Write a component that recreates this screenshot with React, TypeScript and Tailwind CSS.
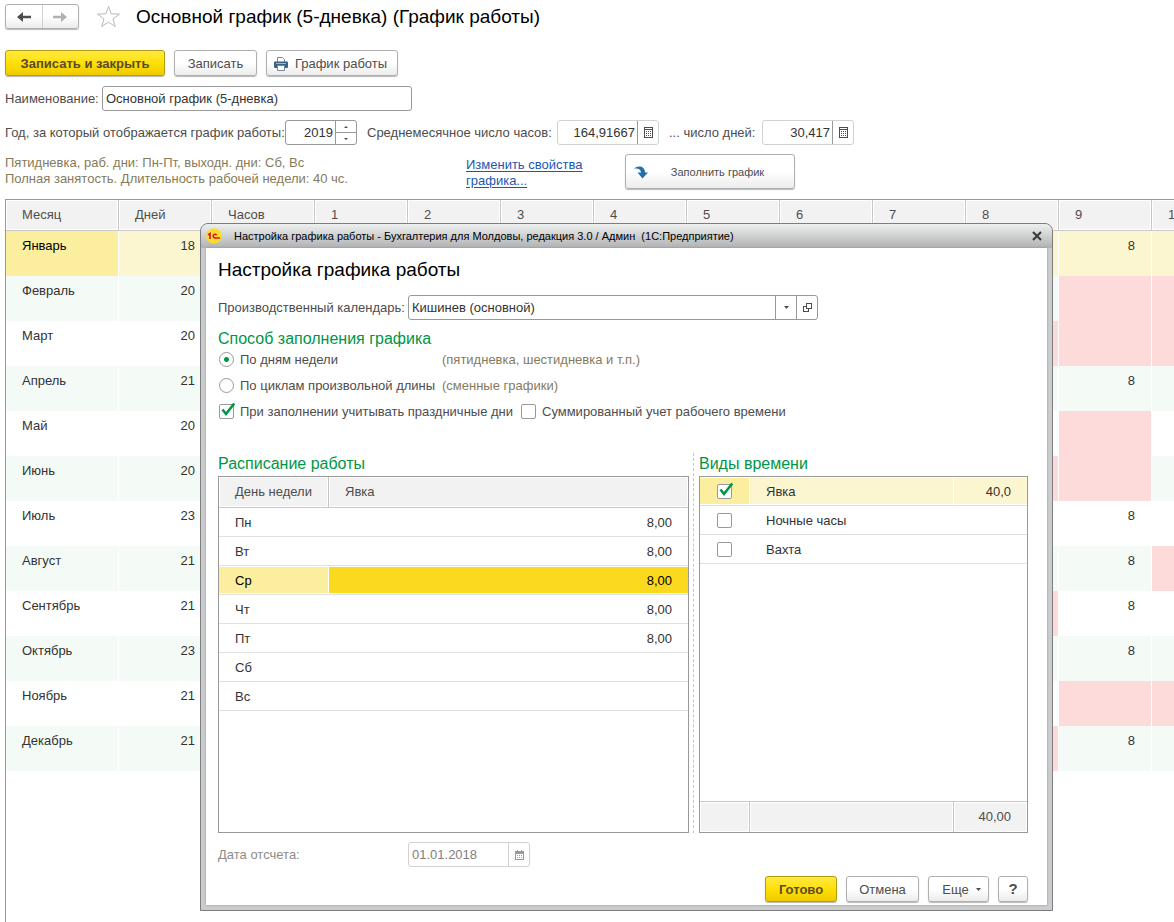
import type { ReactNode } from "react";
import clsx from "clsx";

const months = [
  { name: "Январь", days: 18, cells: ["", "8", ""] },
  { name: "Февраль", days: 20, cells: ["", "off", "off"] },
  { name: "Март", days: 20, cells: ["off", "off", "off"] },
  { name: "Апрель", days: 21, cells: ["", "8", ""] },
  { name: "Май", days: 20, cells: ["", "off", ""] },
  { name: "Июнь", days: 20, cells: ["off", "off", ""] },
  { name: "Июль", days: 23, cells: ["", "8", ""] },
  { name: "Август", days: 21, cells: ["", "8", "off"] },
  { name: "Сентябрь", days: 21, cells: ["off", "8", ""] },
  { name: "Октябрь", days: 23, cells: ["", "8", ""] },
  { name: "Ноябрь", days: 21, cells: ["", "off", "off"] },
  { name: "Декабрь", days: 21, cells: ["off", "8", ""] },
];

const weekDays = [
  { name: "Пн", hours: "8,00" },
  { name: "Вт", hours: "8,00" },
  { name: "Ср", hours: "8,00" },
  { name: "Чт", hours: "8,00" },
  { name: "Пт", hours: "8,00" },
  { name: "Сб", hours: "" },
  { name: "Вс", hours: "" },
];

const timeKinds = [
  { name: "Явка", hours: "40,0", checked: true },
  { name: "Ночные часы", hours: "", checked: false },
  { name: "Вахта", hours: "", checked: false },
];

const dayColumns = ["1", "2", "3", "4", "5", "6", "7", "8", "9", "10"];

function Button({
  children,
  primary,
  className,
  label,
}: {
  children: ReactNode;
  primary?: boolean;
  className?: string;
  label?: string;
}) {
  return (
    <button
      type="button"
      aria-label={label}
      className={clsx(
        "flex h-[26px] items-center justify-center rounded-[3px] border bg-linear-to-b pt-px shadow-[0_1px_1px_#b8b8b8]",
        primary
          ? "border-[#b39b13] from-[#ffea3a] via-[#ffe000] to-[#efcb00] font-bold text-[#5a4c2c]"
          : "border-[#b0b0b0] from-white via-white to-[#ececec] text-[#4d4d4d]",
        className
      )}
    >
      {children}
    </button>
  );
}

function Checkbox({ id, checked, label }: { id?: string; checked?: boolean; label?: string }) {
  return (
    <span className="relative block size-[15px] shrink-0">
      <input
        id={id}
        type="checkbox"
        aria-label={label}
        defaultChecked={checked}
        className="peer block size-[15px] appearance-none rounded-[2px] border border-[#999] bg-white"
      />
      <svg
        viewBox="0 0 15 15"
        className="pointer-events-none absolute inset-0 hidden size-[15px] overflow-visible peer-checked:block"
      >
        <path d="M3.500 5.500L7 10L15.200-.5" fill="none" stroke="#009646" strokeWidth="2.600" />
      </svg>
    </span>
  );
}

function Radio({ id, checked }: { id: string; checked?: boolean }) {
  return (
    <input
      id={id}
      type="radio"
      name="fill-mode"
      defaultChecked={checked}
      className="size-[15px] shrink-0 appearance-none rounded-full border border-[#999] bg-white checked:bg-[radial-gradient(circle,#009646_2px,#fff_3px)]"
    />
  );
}

function CalculatorIcon() {
  return (
    <svg width="9" height="11" viewBox="0 0 9 11" shapeRendering="crispEdges">
      <rect x="0.5" y="0.5" width="8" height="10" fill="#fff" stroke="#4d4d4d" />
      <path d="M1 2.5h7" stroke="#4d4d4d" />
      <path d="M2 4.5h5M2 6.5h5M2 8.5h5" stroke="#4d4d4d" strokeDasharray="1 1" />
    </svg>
  );
}

function NumberField({ id, value, className }: { id: string; value: string; className: string }) {
  return (
    <div className={clsx("flex h-[25px] rounded-[3px] border border-[#d2d2d2]", className)}>
      <input id={id} defaultValue={value} className="w-full min-w-0 pr-[2px] text-right text-[#333] outline-none" />
      <button
        type="button"
        aria-label="Калькулятор"
        className="flex w-[21px] shrink-0 items-center justify-center border-l border-[#999]"
      >
        <CalculatorIcon />
      </button>
    </div>
  );
}

function HeadCell({ children, last }: { children?: ReactNode; last?: boolean }) {
  return (
    <th
      scope="col"
      className={clsx(
        "h-[31px] border-b border-[#c8c8c8] bg-[#f2f2f2] pl-4 text-left font-normal text-[#4d4d4d] shadow-[inset_0_0_0_1px_#fff]",
        !last && "border-r"
      )}
    >
      {children}
    </th>
  );
}

function YearTable() {
  return (
    <div className="grow overflow-hidden border-t border-l border-[#999]">
      <table className="w-[1239px] table-fixed border-separate border-spacing-0">
        <colgroup>
          <col className="w-[113px]" />
          <col className="w-[93px]" />
          <col className="w-[103px]" />
          {dayColumns.map((day) => (
            <col key={day} className="w-[93px]" />
          ))}
        </colgroup>
        <thead>
          <tr>
            <HeadCell>Месяц</HeadCell>
            <HeadCell>Дней</HeadCell>
            <HeadCell>Часов</HeadCell>
            {dayColumns.map((day) => (
              <HeadCell key={day}>{day}</HeadCell>
            ))}
          </tr>
        </thead>
        <tbody>
          {months.map((month, i) => {
            const row = i === 0 ? "bg-[#fcf6d0]" : i % 2 ? "bg-[#f4fbf7]" : "bg-white";
            const cell = "h-[45px] border-r border-white pt-[7px] align-top leading-4";
            return (
              <tr key={month.name} className="text-[#333]">
                <td className={clsx(cell, "pl-4", i === 0 ? "bg-[#fcee9f] text-black" : row)}>{month.name}</td>
                <td className={clsx(cell, row, "pr-4 text-right")}>{month.days}</td>
                <td className={clsx(cell, row)} colSpan={8} />
                {month.cells.map((value, n) => (
                  <td key={n} className={clsx(cell, "pr-4 text-right", value === "off" ? "bg-[#fddbda]" : row)}>
                    {value === "off" ? "" : value}
                  </td>
                ))}
              </tr>
            );
          })}
        </tbody>
      </table>
    </div>
  );
}

function Toolbar() {
  return (
    <header className="flex flex-col pt-1">
      <div className="flex items-center">
        <div className="flex h-[25px] w-[74px] rounded-[3px] border border-[#b0b0b0] bg-linear-to-b from-white via-white to-[#ececec] shadow-[0_1px_1px_#b8b8b8]">
          <button type="button" aria-label="Назад" className="flex flex-1 items-center justify-center border-r border-[#d0d0d0]">
            <svg width="14" height="10" viewBox="0 0 14 10">
              <path d="M0 5l6-5v3.7h8v2.6H6V10z" fill="#4d4d4d" />
            </svg>
          </button>
          <button type="button" aria-label="Вперед" className="flex flex-1 items-center justify-center">
            <svg width="14" height="10" viewBox="0 0 14 10">
              <path d="M14 5L8 0v3.7H0v2.6h8V10z" fill="#b0b0b0" />
            </svg>
          </button>
        </div>
        <button type="button" aria-label="В избранное" className="ml-[17px]">
          <svg width="25" height="23" viewBox="0 0 25 23" fill="none" stroke="#b4b9c0">
            <path d="M12.5 1.5l2.7 7.3 8.3.3-6.5 4.9 2.3 7.5-6.8-4.3-6.8 4.3L8 14 1.5 9.100l8.300-.3z" />
          </svg>
        </button>
        <h1 className="ml-[15px] text-[19px] leading-6 text-black">Основной график (5-дневка) (График работы)</h1>
      </div>

      <div className="mt-[21px] flex gap-[9px]">
        <Button primary className="w-[160px]">
          Записать и закрыть
        </Button>
        <Button className="w-[83px]">Записать</Button>
        <Button className="w-[132px] gap-[7px] pr-[3px]">
          <svg width="14" height="14" viewBox="0 0 14 14">
            <path d="M3.500 5V.5h5l2 2V5" fill="#fff" stroke="#6e8aa5" />
            <path d="M1 4.500h12a1 1 0 0 1 1 1V10a1 1 0 0 1-1 1H1a1 1 0 0 1-1-1V5.500a1 1 0 0 1 1-1z" fill="#3a6186" />
            <path d="M2 6.500h10" stroke="#9bb5cc" />
            <path d="M3.500 8.500h7v5h-7z" fill="#fff" stroke="#6e8aa5" />
          </svg>
          График работы
        </Button>
      </div>

      <div className="mt-[10px] flex items-center">
        <label htmlFor="name" className="w-[97px]">
          Наименование:
        </label>
        <input
          id="name"
          defaultValue="Основной график (5-дневка)"
          className="h-[25px] w-[310px] rounded-[3px] border border-[#999] px-[3px] text-[#333] outline-none"
        />
      </div>

      <div className="mt-[9px] flex items-center">
        <label htmlFor="year" className="w-[280px]">
          Год, за который отображается график работы:
        </label>
        <div className="flex h-[25px] w-[72px] rounded-[3px] border border-[#999]">
          <input id="year" defaultValue="2019" className="w-full min-w-0 pr-[2px] text-right text-[#333] outline-none" />
          <div className="flex w-[21px] shrink-0 flex-col border-l border-[#999]">
            <button type="button" aria-label="Больше" className="flex flex-1 items-center justify-center border-b border-[#999]">
              <svg width="4" height="2" viewBox="0 0 4 2">
                <path d="M0 2l2-2 2 2z" fill="#4d4d4d" />
              </svg>
            </button>
            <button type="button" aria-label="Меньше" className="flex flex-1 items-center justify-center">
              <svg width="4" height="2" viewBox="0 0 4 2">
                <path d="M0 0l2 2 2-2z" fill="#4d4d4d" />
              </svg>
            </button>
          </div>
        </div>
        <label htmlFor="hours" className="ml-[10px] w-[190px]">
          Среднемесячное число часов:
        </label>
        <NumberField id="hours" value="164,91667" className="w-[102px]" />
        <label htmlFor="days" className="ml-[10px] w-[93px]">
          ... число дней:
        </label>
        <NumberField id="days" value="30,417" className="w-[92px]" />
      </div>

      <div className="mt-[9px] mb-[10px] flex items-start leading-4">
        <p className="w-[461px] pt-px text-[#857b5c]">
          Пятидневка, раб. дни: Пн-Пт, выходн. дни: Сб, Вс
          <br />
          Полная занятость. Длительность рабочей недели: 40 чс.
        </p>
        <a href="#" className="w-[159px] pt-[3px] text-[#1b57b1] underline underline-offset-2">
          Изменить свойства
          <br />
          графика...
        </a>
        <Button className="h-[35px] w-[170px] gap-[23px] pr-[22px] text-[11px]">
          <svg width="14" height="13" viewBox="0 0 14 13">
            <path d="M0 2.500C4-1 11 0 11 6.500h3L8.500 12.500 3.500 6.500H7C7 3.500 4 2 0 2.500z" fill="#2170ae" />
          </svg>
          Заполнить график
        </Button>
      </div>
    </header>
  );
}

function ScheduleTable() {
  return (
    <section className="min-w-0 flex-1">
      <h3 className="mb-[2px] pt-px text-base leading-5 text-[#009646]">Расписание работы</h3>
      <div className="h-[357px] border border-[#999]">
        <table className="w-full table-fixed border-separate border-spacing-0 text-[#333]">
          <colgroup>
            <col className="w-[110px]" />
            <col />
          </colgroup>
          <thead>
            <tr>
              <HeadCell>День недели</HeadCell>
              <HeadCell last>Явка</HeadCell>
            </tr>
          </thead>
          <tbody>
            {weekDays.map((day) => {
              const selected = day.name === "Ср";
              const cell = "h-[29px] border-b border-[#e0e0e0] pt-[2px]";
              const inset = "shadow-[inset_0_1px_#fff,inset_0_-1px_#fff]";
              return (
                <tr key={day.name} className={selected ? "text-black" : ""}>
                  <td className={clsx(cell, "pl-4", selected && ["border-r border-r-white bg-[#fcee9f]", inset])}>
                    {day.name}
                  </td>
                  <td className={clsx(cell, "pr-4 text-right", selected && ["bg-[#fbd91f]", inset])}>{day.hours}</td>
                </tr>
              );
            })}
          </tbody>
        </table>
      </div>
    </section>
  );
}

function TimeKinds() {
  return (
    <section className="w-[329px]">
      <h3 className="mb-[2px] pt-px text-base leading-5 text-[#009646]">Виды времени</h3>
      <div className="h-[357px] border border-[#999]">
        <table className="h-full w-full table-fixed border-separate border-spacing-0 text-[#333]">
          <colgroup>
            <col className="w-[50px]" />
            <col />
            <col className="w-[73px]" />
          </colgroup>
          <tbody>
            {timeKinds.map((kind) => {
              const cell = "h-[29px] border-b border-[#e0e0e0]";
              const inset = kind.checked && "border-r-white shadow-[inset_0_1px_#fff,inset_0_-1px_#fff]";
              const tint = kind.checked && "bg-[#fcf6d0]";
              return (
                <tr key={kind.name}>
                  <td className={clsx(cell, "pl-[17px]", kind.checked && "border-r bg-[#fcee9f]", inset)}>
                    <Checkbox checked={kind.checked} label={kind.name} />
                  </td>
                  <td className={clsx(cell, "pt-[2px] pl-4", kind.checked && "border-r", tint, inset)}>{kind.name}</td>
                  <td className={clsx(cell, "pt-[2px] pr-4 text-right", tint, inset)}>{kind.hours}</td>
                </tr>
              );
            })}
            <tr>
              <td colSpan={3} />
            </tr>
          </tbody>
          <tfoot>
            <tr className="text-[#4d4d4d]">
              <td className="h-[31px] border-t border-r border-[#c8c8c8] bg-[#f2f2f2] shadow-[inset_0_0_0_1px_#fff]" />
              <td className="border-t border-r border-[#c8c8c8] bg-[#f2f2f2] shadow-[inset_0_0_0_1px_#fff]" />
              <td className="border-t border-[#c8c8c8] bg-[#f2f2f2] pr-4 text-right shadow-[inset_0_0_0_1px_#fff]">40,00</td>
            </tr>
          </tfoot>
        </table>
      </div>
    </section>
  );
}

function SettingsDialog() {
  return (
    <div
      role="dialog"
      aria-labelledby="dialog-title"
      className="absolute top-[223px] left-[200px] w-[853px] rounded-t-[8px] border border-[#7d7d7f] bg-[#cbccce] px-[5px] pb-[5px]"
    >
      <div className="-mx-[5px] flex h-6 items-center rounded-t-[7px] bg-linear-to-b from-[#eeefef] via-[#cfd0d1] to-[#b0b1b3] pr-[10px] pl-[5px]">
        <svg width="16" height="16" viewBox="0 0 16 16">
          <circle cx="8" cy="8" r="7.800" fill="#fbdc2e" />
          <path
            d="M2 6.800L4 5.500V11M10.600 6.900A1.900 1.900 0 1 0 9.200 10H14"
            fill="none"
            stroke="#d8161c"
            strokeWidth="1.600"
          />
        </svg>
        <span id="dialog-title" className="ml-3 grow text-[11px] whitespace-pre text-black">
          Настройка графика работы - Бухгалтерия для Молдовы, редакция 3.0 / Админ{"  "}(1С:Предприятие)
        </span>
        <button type="button" aria-label="Закрыть">
          <svg width="10" height="10" viewBox="0 0 10 10">
            <path d="M1 1l8 8M9 1L1 9" stroke="#3c3c3c" strokeWidth="2.200" />
          </svg>
        </button>
      </div>

      <div className="bg-white pt-[10px] pr-[19px] pb-[3px] pl-3 shadow-[0_0_2px_#909090]">
        <h2 className="text-[19px] leading-6 text-black">Настройка графика работы</h2>

        <div className="mt-[13px] flex items-center">
          <label htmlFor="calendar" className="w-[190px]">
            Производственный календарь:
          </label>
          <div className="flex h-[25px] w-[410px] rounded-[3px] border border-[#999]">
            <input
              id="calendar"
              defaultValue="Кишинев (основной)"
              className="min-w-0 grow px-[3px] text-[#333] outline-none"
            />
            <button type="button" aria-label="Выбрать" className="flex w-[21px] items-center justify-center border-l border-[#999]">
              <svg width="5" height="3" viewBox="0 0 5 3">
                <path d="M0 0h5L2.500 3z" fill="#4d4d4d" />
              </svg>
            </button>
            <button type="button" aria-label="Открыть" className="flex w-[21px] items-center justify-center border-l border-[#999]">
              <svg width="9" height="9" viewBox="0 0 9 9" fill="none" stroke="#4d4d4d" shapeRendering="crispEdges">
                <path d="M3.500.5h5v5h-5zM3 3.500H.5v5h5V6" />
              </svg>
            </button>
          </div>
        </div>

        <h3 className="mt-[9px] text-base leading-5 text-[#009646]">Способ заполнения графика</h3>
        <div className="mt-[2px] flex flex-col gap-[9px] pl-px leading-4">
          <div className="flex items-center">
            <Radio id="by-week" checked />
            <label htmlFor="by-week" className="ml-[6px] w-[202px] pt-px">
              По дням недели
            </label>
            <span className="pt-px text-[#857b5c]">(пятидневка, шестидневка и т.п.)</span>
          </div>
          <div className="flex items-center">
            <Radio id="by-cycle" />
            <label htmlFor="by-cycle" className="ml-[6px] w-[202px] pt-px">
              По циклам произвольной длины
            </label>
            <span className="pt-px text-[#857b5c]">(сменные графики)</span>
          </div>
          <div className="flex items-center">
            <Checkbox id="holidays" checked />
            <label htmlFor="holidays" className="ml-[6px] w-[281px] pt-px">
              При заполнении учитывать праздничные дни
            </label>
            <Checkbox id="summary" />
            <label htmlFor="summary" className="ml-[6px] pt-px">
              Суммированный учет рабочего времени
            </label>
          </div>
        </div>

        <div className="mt-[33px] flex">
          <ScheduleTable />
          <div className="mr-[5px] ml-1 border-l border-dashed border-[#c8c8c8]" />
          <TimeKinds />
        </div>

        <div className="mt-[9px] flex items-center text-[#8c8c8c]">
          <label htmlFor="start" className="w-[190px]">
            Дата отсчета:
          </label>
          <div className="flex h-[25px] w-[122px] rounded-[3px] border border-[#d2d2d2]">
            <input id="start" disabled defaultValue="01.01.2018" className="min-w-0 grow px-[3px] text-[#808080]" />
            <button
              type="button"
              disabled
              aria-label="Календарь"
              className="flex w-[21px] shrink-0 items-center justify-center border-l border-[#d2d2d2]"
            >
              <svg width="9" height="10" viewBox="0 0 9 10" fill="none" stroke="#999" shapeRendering="crispEdges">
                <path d="M.5 1.500h8v8h-8z" />
                <path d="M2.500 0v2M6.500 0v2M1 2.500h7M1 3.500h7" />
                <path d="M2 5.500h5M2 7.500h5" strokeDasharray="1 1" />
              </svg>
            </button>
          </div>
        </div>

        <div className="mt-[9px] flex justify-end gap-[9px]">
          <Button primary className="w-[72px]">
            Готово
          </Button>
          <Button className="w-[73px]">Отмена</Button>
          <Button className="w-[61px] gap-[7px] pl-[6px]">
            Еще
            <svg width="5" height="3" viewBox="0 0 5 3">
              <path d="M0 0h5L2.500 3z" fill="#4d4d4d" />
            </svg>
          </Button>
          <Button className="w-[30px] text-[15px] font-bold" label="Справка">
            ?
          </Button>
        </div>
      </div>
    </div>
  );
}

export default function App() {
  return (
    <main className="relative flex min-h-screen flex-col overflow-hidden bg-white pl-[5px] font-['Liberation_Sans',Arial,sans-serif] text-[13px] text-[#4d4d4d]">
      <Toolbar />
      <YearTable />
      <SettingsDialog />
    </main>
  );
}
